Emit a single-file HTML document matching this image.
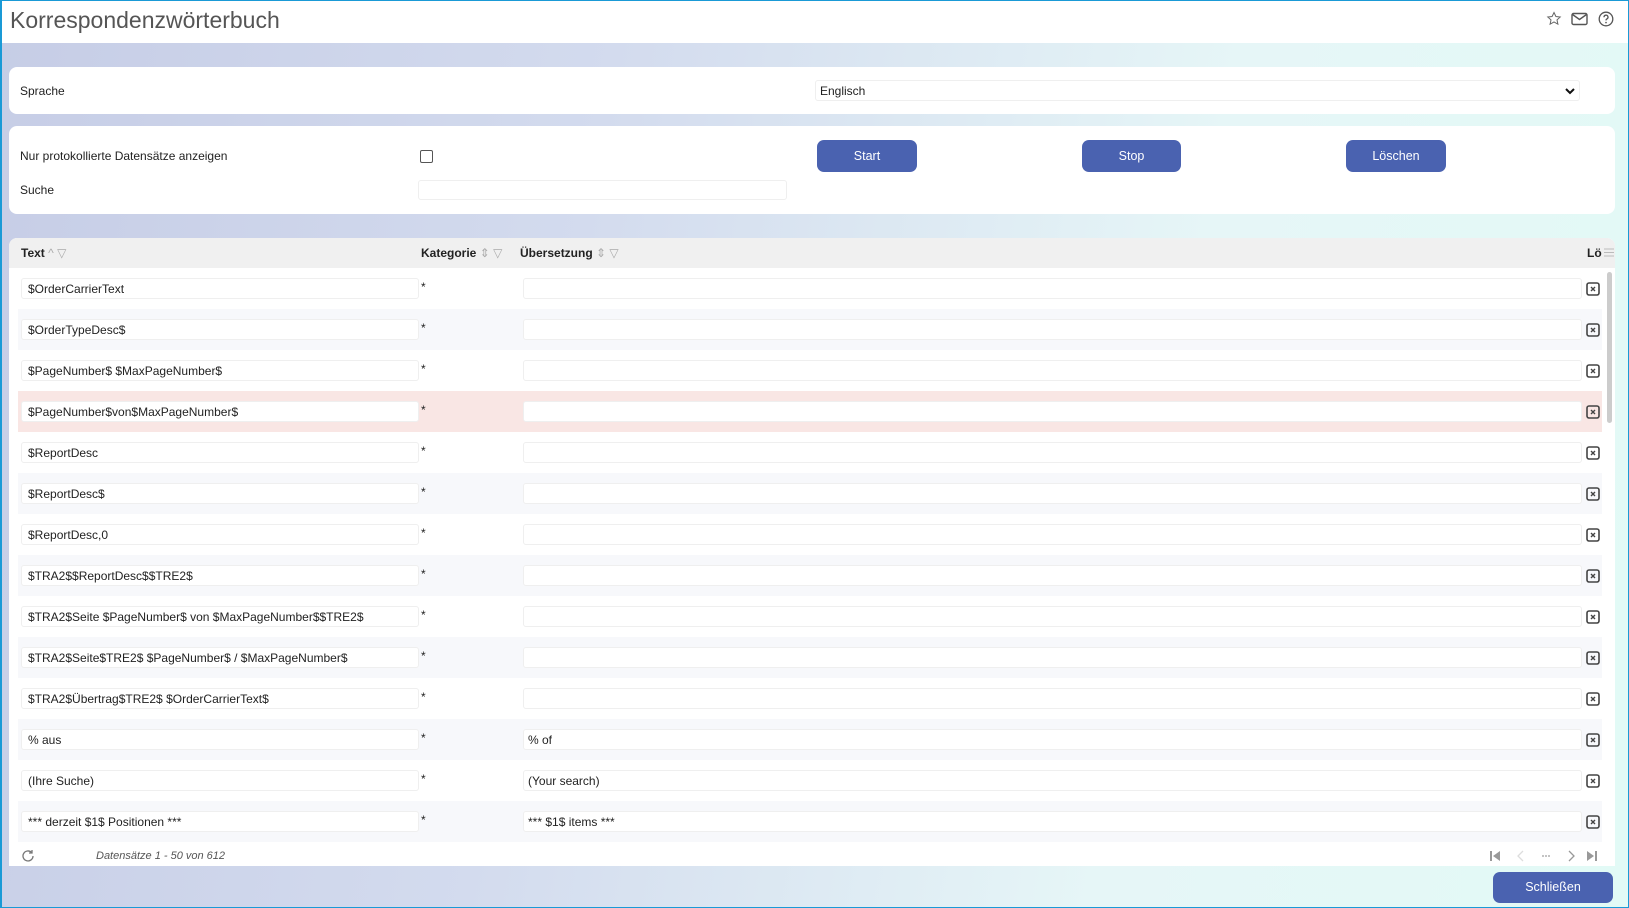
<!DOCTYPE html>
<html><head><meta charset="utf-8"><style>
*{box-sizing:border-box;margin:0;padding:0}
body{width:1629px;height:908px;overflow:hidden;font-family:"Liberation Sans",Arial,sans-serif;font-size:12px;color:#222;position:relative;background:linear-gradient(100deg,#c6cde6 0%,#d3dbee 35%,#e6f6f7 70%,#e2faf6 100%)}
.frame{position:absolute;inset:0;border:1px solid #1a9ad6;border-left-width:2px;pointer-events:none;z-index:10}
.top{position:absolute;left:0;top:0;width:1629px;height:43px;background:#fff}
.title{position:absolute;left:10px;top:7px;font-size:23px;color:#555}
.panel{position:absolute;background:#fff;border-radius:8px}
.abs{position:absolute}
.inp{position:absolute;background:#fff;border:1px solid #efefef;border-radius:3px}
.btn{position:absolute;background:#4a62b0;color:#fff;border-radius:7px;text-align:center;font-size:12.5px}
.row{position:absolute;left:18px;width:1584px;height:41px}
.x{position:absolute;left:1586px;width:14px;height:14px}
</style></head><body>
<div class="top"></div>
<div class="title">Korrespondenzwörterbuch</div>
<svg class="abs" style="left:1546px;top:11px" width="16" height="16" viewBox="0 0 16 16"><path d="M8 1.5l1.9 4 4.3.5-3.2 2.9.9 4.3L8 11l-3.9 2.2.9-4.3L1.8 6l4.3-.5z" fill="none" stroke="#666" stroke-width="1"/></svg>
<svg class="abs" style="left:1571px;top:12px" width="17" height="14" viewBox="0 0 17 14"><rect x="1" y="1.5" width="15" height="11" rx="1.5" fill="none" stroke="#555" stroke-width="1.4"/><path d="M1.5 2.5l7 5 7-5" fill="none" stroke="#555" stroke-width="1.4"/></svg>
<svg class="abs" style="left:1598px;top:11px" width="16" height="16" viewBox="0 0 16 16"><circle cx="8" cy="8" r="6.8" fill="none" stroke="#555" stroke-width="1.3"/><path d="M6 6.2a2 2 0 1 1 2.8 1.8c-.6.3-.8.7-.8 1.4" fill="none" stroke="#555" stroke-width="1.3"/><circle cx="8" cy="11.6" r=".8" fill="#555"/></svg>

<div class="panel" style="left:9px;top:67px;width:1606px;height:47px"></div>
<div class="abs" style="left:20px;top:84px">Sprache</div>
<div class="inp" style="left:815px;top:80px;width:765px;height:21px"><span class="abs" style="left:4px;top:3px">Englisch</span>
<svg class="abs" style="left:749px;top:6px" width="10" height="8" viewBox="0 0 10 8"><path d="M1 2l4 4 4-4" fill="none" stroke="#111" stroke-width="2"/></svg></div>

<div class="panel" style="left:9px;top:126px;width:1606px;height:88px"></div>
<div class="abs" style="left:20px;top:149px">Nur protokollierte Datensätze anzeigen</div>
<div class="abs" style="left:420px;top:150px;width:13px;height:13px;border:1px solid #555;border-radius:2px;background:#fff"></div>
<div class="abs" style="left:20px;top:183px">Suche</div>
<div class="inp" style="left:418px;top:180px;width:369px;height:20px"></div>
<div class="btn" style="left:817px;top:140px;width:100px;height:32px;line-height:32px">Start</div>
<div class="btn" style="left:1082px;top:140px;width:99px;height:32px;line-height:32px">Stop</div>
<div class="btn" style="left:1346px;top:140px;width:100px;height:32px;line-height:32px">Löschen</div>

<div class="panel" style="left:9px;top:238px;width:1606px;height:628px;border-radius:8px 8px 0 0"></div>
<div class="abs" style="left:9px;top:238px;width:1606px;height:30px;background:#f0f0f0;border-radius:8px 8px 0 0"></div>
<div class="abs" style="left:21px;top:246px;font-weight:bold">Text <span style="font-weight:normal;color:#aaa">^ ▽</span></div>
<div class="abs" style="left:421px;top:246px;font-weight:bold">Kategorie <span style="font-weight:normal;color:#aaa">⇕ ▽</span></div>
<div class="abs" style="left:520px;top:246px;font-weight:bold">Übersetzung <span style="font-weight:normal;color:#aaa">⇕ ▽</span></div>
<div class="abs" style="left:1587px;top:246px;font-weight:bold">Lö</div>
<svg class="abs" style="left:1604px;top:248px" width="10" height="9" viewBox="0 0 10 9"><path d="M0 1h10M0 4.5h10M0 8h10" stroke="#bbb" stroke-width="1"/></svg>
<div class="abs" style="left:1607px;top:272px;width:5px;height:151px;background:#ccc;border-radius:3px"></div>

<div id="rows"></div>
<script>
var d=[["$OrderCarrierText",""],["$OrderTypeDesc$",""],["$PageNumber$ $MaxPageNumber$",""],["$PageNumber$von$MaxPageNumber$",""],["$ReportDesc",""],["$ReportDesc$",""],["$ReportDesc,0",""],["$TRA2$$ReportDesc$$TRE2$",""],["$TRA2$Seite $PageNumber$ von $MaxPageNumber$$TRE2$",""],["$TRA2$Seite$TRE2$ $PageNumber$ / $MaxPageNumber$",""],["$TRA2$Übertrag$TRE2$ $OrderCarrierText$",""],["% aus","% of"],["(Ihre Suche)","(Your search)"],["*** derzeit $1$ Positionen ***","*** $1$ items ***"]];
var h="";
d.forEach(function(r,i){var t=268+i*41;var bg=i==3?"#f9e6e4":(i%2?"#f7f8fb":"#fff");
h+='<div class="row" style="top:'+t+'px;background:'+bg+'"></div>';
h+='<div class="inp" style="left:21px;top:'+(t+10)+'px;width:398px;height:21px"><span class="abs" style="left:6px;top:3px;white-space:nowrap">'+r[0]+'</span></div>';
h+='<div class="abs" style="left:421px;top:'+(t+12)+'px">*</div>';
h+='<div class="inp" style="left:523px;top:'+(t+10)+'px;width:1059px;height:21px"><span class="abs" style="left:4px;top:3px;white-space:nowrap">'+r[1]+'</span></div>';
h+='<svg class="x" style="top:'+(t+14)+'px" viewBox="0 0 14 14"><rect x="1" y="1" width="12" height="12" rx="2" fill="none" stroke="#444" stroke-width="1.6"/><path d="M5 5l4 4M9 5l-4 4" stroke="#444" stroke-width="1.4"/></svg>';});
document.getElementById("rows").innerHTML=h;
</script>

<svg class="abs" style="left:21px;top:849px" width="14" height="14" viewBox="0 0 14 14"><path d="M12 7a5 5 0 1 1-1.5-3.6" fill="none" stroke="#777" stroke-width="1.3"/><path d="M11 1v3H8" fill="none" stroke="#777" stroke-width="1.3"/></svg>
<div class="abs" style="left:96px;top:850px;font-style:italic;font-size:11px;color:#555">Datensätze 1 - 50 von 612</div>
<svg class="abs" style="left:1490px;top:850px" width="110" height="12" viewBox="0 0 110 12">
<path d="M1 1v10" stroke="#999" stroke-width="2"/><path d="M10 1v10L3 6z" fill="#999"/>
<path d="M33 1l-5 5 5 5" fill="none" stroke="#ddd" stroke-width="1.3"/>
<circle cx="53" cy="6" r=".9" fill="#999"/><circle cx="56" cy="6" r=".9" fill="#999"/><circle cx="59" cy="6" r=".9" fill="#999"/>
<path d="M79 1l5 5-5 5" fill="none" stroke="#999" stroke-width="1.3"/>
<path d="M97 1v10l7-5z" fill="#999"/><path d="M106 1v10" stroke="#999" stroke-width="2"/>
</svg>
<div class="btn" style="left:1493px;top:872px;width:120px;height:31px;line-height:31px">Schließen</div>
<div class="frame"></div>
</body></html>
